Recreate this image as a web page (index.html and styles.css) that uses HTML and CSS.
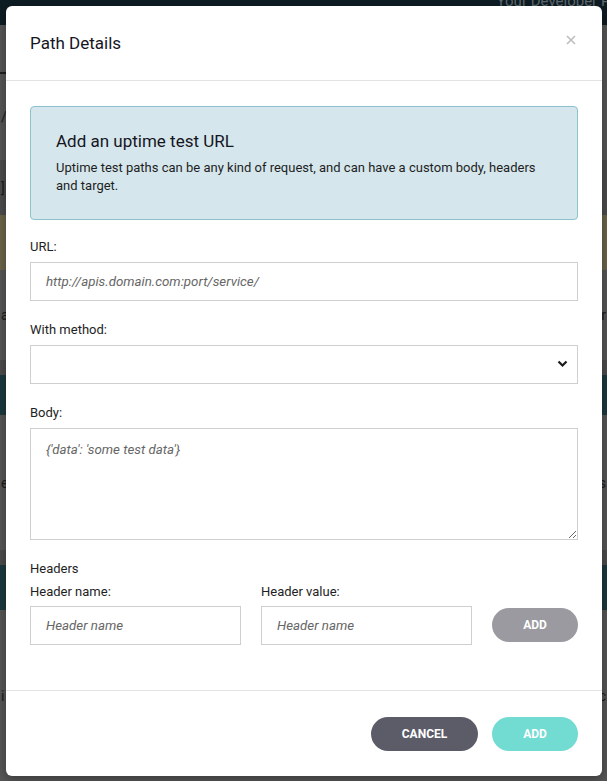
FILE: index.html
```html
<!DOCTYPE html>
<html lang="en">
<head>
<meta charset="utf-8">
<title>Path Details</title>
<link rel="stylesheet" href="styles.css">
</head>
<body>
<div class="page">
  <div class="bg-top"><span class="portal">Your Developer Portal</span></div>
  <div class="bg-gray h47"></div>
  <div class="bg-line"></div>
  <div class="bg-gray h86 chars"><span class="c-left">/</span></div>
  <div class="bg-dark h55 chars"><span class="c-left">]</span></div>
  <div class="bg-tan h55"></div>
  <div class="bg-gray h90 chars"><span class="c-left">a</span><span class="c-right">r</span></div>
  <div class="bg-dark h15"></div>
  <div class="bg-teal h40"></div>
  <div class="bg-gray h135 chars"><span class="c-left">e</span><span class="c-right">s</span></div>
  <div class="bg-dark h15"></div>
  <div class="bg-teal h45"></div>
  <div class="bg-gray h171 chars"><span class="c-left">i</span><span class="c-right">c</span></div>
</div>

<div class="modal" role="dialog" aria-labelledby="modal-title">
  <div class="modal-header">
    <h4 class="modal-title" id="modal-title">Path Details</h4>
    <button class="close" type="button" aria-label="Close">
      <svg width="10" height="10" viewBox="0 0 10 10"><path d="M1 1L9 9M9 1L1 9" stroke="#bdbdbd" stroke-width="1.6" fill="none"/></svg>
    </button>
  </div>

  <div class="modal-body">
    <div class="info-box">
      <h3 class="info-title">Add an uptime test URL</h3>
      <p class="info-text">Uptime test paths can be any kind of request, and can have a custom body, headers and target.</p>
    </div>

    <div class="form-group">
      <label class="label">URL:</label>
      <input class="input" type="text" placeholder="http://apis.domain.com:port/service/">
    </div>

    <div class="form-group">
      <label class="label">With method:</label>
      <div class="select-wrap">
        <select class="input select"><option></option></select>
        <svg class="chevron" width="11" height="8" viewBox="0 0 11 8"><path d="M1.5 1.5L5.5 5.5L9.5 1.5" stroke="#1a1a1a" stroke-width="2.2" fill="none"/></svg>
      </div>
    </div>

    <div class="form-group">
      <label class="label">Body:</label>
      <textarea class="input textarea" placeholder="{'data': 'some test data'}"></textarea>
    </div>

    <div class="headers">
      <div class="label headers-title">Headers</div>
      <div class="header-row">
        <div class="header-col">
          <label class="label">Header name:</label>
          <input class="input" type="text" placeholder="Header name">
        </div>
        <div class="header-col">
          <label class="label">Header value:</label>
          <input class="input" type="text" placeholder="Header name">
        </div>
        <button class="btn btn-gray" type="button">ADD</button>
      </div>
    </div>
  </div>

  <div class="modal-footer">
    <button class="btn btn-dark" type="button">CANCEL</button>
    <button class="btn btn-teal" type="button">ADD</button>
  </div>
</div>
</body>
</html>
```

FILE: styles.css
```css
* { box-sizing: border-box; }

html, body {
  margin: 0;
  padding: 0;
  height: 781px;
  overflow: hidden;
}

body {
  font-family: Roboto, "Liberation Sans", Arial, sans-serif;
  background: #565656;
  color: #1e1e24;
  position: relative;
}

/* background page behind the overlay */
.page { width: 607px; }
.bg-top {
  height: 25px;
  background: #0e1c23;
  display: flex;
  justify-content: flex-end;
  overflow: hidden;
}
.portal {
  font-size: 15px;
  line-height: 18px;
  color: #5f6a70;
  margin-top: -8px;
  margin-right: -34px;
  white-space: nowrap;
}
.bg-gray { background: #565656; }
.bg-dark { background: #4c4c4c; }
.bg-tan { background: #6b6549; }
.bg-teal { background: #1c393e; }
.bg-line { height: 2px; background: #1f1f1f; width: 12px; }
.h15 { height: 15px; }
.h40 { height: 40px; }
.h45 { height: 45px; }
.h47 { height: 47px; }
.h55 { height: 55px; }
.h86 { height: 86px; }
.h90 { height: 90px; }
.h135 { height: 135px; }
.h171 { height: 171px; }
.chars {
  display: flex;
  justify-content: space-between;
  align-items: center;
  font-size: 14px;
  color: #1a1a1a;
  padding: 0 1px;
}

/* modal */
.modal {
  position: absolute;
  top: 6px;
  left: 6px;
  width: 596px;
  background: #fff;
  border-radius: 6px;
  box-shadow: 0 3px 12px rgba(0, 0, 0, 0.35);
}

.modal-header {
  display: flex;
  justify-content: space-between;
  align-items: center;
  padding: 27px 24px 27px 24px;
  border-bottom: 1px solid #e3e3e3;
}
.modal-title {
  margin: 0;
  font-size: 17px;
  font-weight: 400;
  line-height: 20px;
  color: #15151f;
}
.close {
  border: 0;
  background: none;
  padding: 0;
  margin: -6px 1px 0 0;
  width: 12px;
  height: 12px;
  display: flex;
  align-items: center;
  justify-content: center;
}

.modal-body {
  padding: 25px 24px 25px 24px;
  border-bottom: 1px solid #e3e3e3;
}

.info-box {
  background: #d5e7ec;
  border: 1px solid #8cc2cb;
  border-radius: 4px;
  padding: 24px 25px 24px 25px;
  margin-bottom: 18px;
}
.info-title {
  margin: 0 0 8px 0;
  font-size: 17px;
  font-weight: 400;
  line-height: 20px;
  color: #15151f;
}
.info-text {
  margin: 0;
  font-size: 13px;
  line-height: 18px;
  color: #1e1e24;
}

.form-group {
  display: flex;
  flex-direction: column;
  margin-bottom: 20px;
}
.label {
  display: block;
  font-size: 13px;
  line-height: 18px;
  color: #1e1e24;
  margin-bottom: 6px;
}

.input {
  display: block;
  width: 100%;
  height: 39px;
  border: 1px solid #cfcfcf;
  border-radius: 0;
  background: #fff;
  padding: 0 15px;
  font-family: Roboto, "Liberation Sans", Arial, sans-serif;
  font-size: 13.3px;
  color: #333;
  outline: none;
}
.input::placeholder {
  font-style: italic;
  color: #666;
}

.select-wrap { position: relative; }
.select {
  -webkit-appearance: none;
  appearance: none;
}
.chevron {
  position: absolute;
  right: 10px;
  top: 15px;
}

.textarea {
  height: 112px;
  padding: 12px 15px;
  line-height: 18px;
  resize: vertical;
}

.headers { margin-bottom: 20px; }
.headers-title { margin-bottom: 5px; }
.header-row {
  display: flex;
  align-items: flex-end;
  gap: 20px;
}
.header-col {
  width: 211px;
  display: flex;
  flex-direction: column;
}
.header-col .label { margin-bottom: 5px; }

.btn {
  border: 0;
  border-radius: 17px;
  height: 34px;
  font-family: Roboto, "Liberation Sans", Arial, sans-serif;
  font-size: 12px;
  font-weight: 700;
  color: #fff;
  letter-spacing: 0;
  padding: 0;
  cursor: pointer;
}
.btn-gray {
  width: 86px;
  background: #9a9aa0;
  margin-bottom: 3px;
}
.btn-dark {
  width: 107px;
  background: #5c5c68;
}
.btn-teal {
  width: 86px;
  background: #72dbd2;
}

.modal-footer {
  display: flex;
  justify-content: flex-end;
  gap: 14px;
  padding: 26px 24px 25px 24px;
}
```
